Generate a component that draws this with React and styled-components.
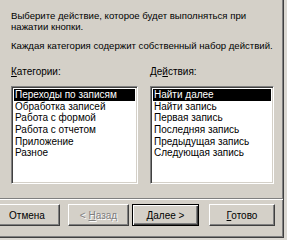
import React from "react";
import styled, { createGlobalStyle } from "styled-components";

const GlobalStyle = createGlobalStyle`
  html, body {
    margin: 0;
    padding: 0;
    background: #dcd9d3;
  }
`;

const Frame = styled.div`
  width: 287px;
  height: 240px;
  overflow: hidden;
  background: #dcd9d3;
`;

const Window = styled.div`
  width: 283px;
  height: 237px;
  background: #d4d0c8;
  border-right: 1px solid #404040;
  border-bottom: 1px solid #404040;
  box-shadow: inset -1px -1px 0 #808080;
  font-family: "Liberation Sans", Arial, sans-serif;
  font-size: 10px;
  line-height: 11px;
  color: #000;
  display: flex;
  flex-direction: column;
  overflow: hidden;
`;

const Body = styled.div`
  padding: 10px 0 0 11px;
  display: flex;
  flex-direction: column;
`;

const Para = styled.p`
  margin: 0 0 ${(p) => p.gap || 0}px;
  width: 272px;
  font-size: 9.6px;
  white-space: ${(p) => (p.nowrap ? "nowrap" : "normal")};
`;

const Columns = styled.div`
  display: flex;
  gap: 12px;
  margin-top: 15px;
`;

const Column = styled.div`
  display: flex;
  flex-direction: column;
`;

const Label = styled.div`
  height: 20px;
`;

const Key = styled.span`
  text-decoration: underline;
`;

const ListBox = styled.ul`
  list-style: none;
  margin: 0;
  padding: 2px 2px;
  width: ${(p) => p.width}px;
  height: 98px;
  box-sizing: border-box;
  background: #fff;
  border-top: 1px solid #808080;
  border-left: 1px solid #808080;
  border-right: 1px solid #fff;
  border-bottom: 1px solid #fff;
  box-shadow: inset 1px 1px 0 #404040, inset -1px -1px 0 #d4d0c8;
`;

const Item = styled.li`
  height: 11.7px;
  line-height: 11.7px;
  padding-left: 1px;
  white-space: nowrap;
  background: ${(p) => (p.selected ? "#000" : "transparent")};
  color: ${(p) => (p.selected ? "#fff" : "#000")};
`;

const Separator = styled.div`
  margin-top: 14px;
  height: 0;
  border-top: 1px solid #808080;
  border-bottom: 1px solid #fff;
`;

const ButtonRow = styled.div`
  display: flex;
  margin: 4px 0 0 -6px;
`;

const Button = styled.button`
  box-sizing: border-box;
  width: ${(p) => p.width || 66}px;
  height: 22px;
  margin-left: ${(p) => p.gap || 0}px;
  padding: 0;
  font-family: "Liberation Sans", Arial, sans-serif;
  font-size: 10px;
  background: #d4d0c8;
  color: ${(p) => (p.disabled ? "#808080" : "#000")};
  text-shadow: ${(p) => (p.disabled ? "1px 1px 0 #fff" : "none")};
  border: 1px solid;
  border-color: ${(p) =>
    p.primary ? "#000" : "#fff #404040 #404040 #fff"};
  box-shadow: ${(p) =>
    p.primary
      ? "inset 1px 1px 0 #fff, inset -1px -1px 0 #404040, inset -2px -2px 0 #808080"
      : "inset -1px -1px 0 #808080"};
`;

const categories = [
  "Переходы по записям",
  "Обработка записей",
  "Работа с формой",
  "Работа с отчетом",
  "Приложение",
  "Разное",
];

const actions = [
  "Найти далее",
  "Найти запись",
  "Первая запись",
  "Последняя запись",
  "Предыдущая запись",
  "Следующая запись",
];

const App = () => (
  <Frame>
    <GlobalStyle />
    <Window>
      <Body>
        <Para gap={8}>
          Выберите действие, которое будет выполняться при
          <br />
          нажатии кнопки.
        </Para>
        <Para nowrap>Каждая категория содержит собственный набор действий.</Para>
        <Columns>
          <Column>
            <Label>
              <Key>К</Key>атегории:
            </Label>
            <ListBox width={127}>
              {categories.map((c, i) => (
                <Item key={c} selected={i === 0}>
                  {c}
                </Item>
              ))}
            </ListBox>
          </Column>
          <Column>
            <Label>
              Де<Key>й</Key>ствия:
            </Label>
            <ListBox width={124}>
              {actions.map((a, i) => (
                <Item key={a} selected={i === 0}>
                  {a}
                </Item>
              ))}
            </ListBox>
          </Column>
        </Columns>
      </Body>
      <Separator />
      <ButtonRow>
        <Button>Отмена</Button>
        <Button gap={8} width={61} disabled>
          &lt; <Key>Н</Key>азад
        </Button>
        <Button gap={3} width={67} primary>
          <Key>Д</Key>алее &gt;
        </Button>
        <Button gap={10}>
          <Key>Г</Key>отово
        </Button>
      </ButtonRow>
    </Window>
  </Frame>
);

export default App;
